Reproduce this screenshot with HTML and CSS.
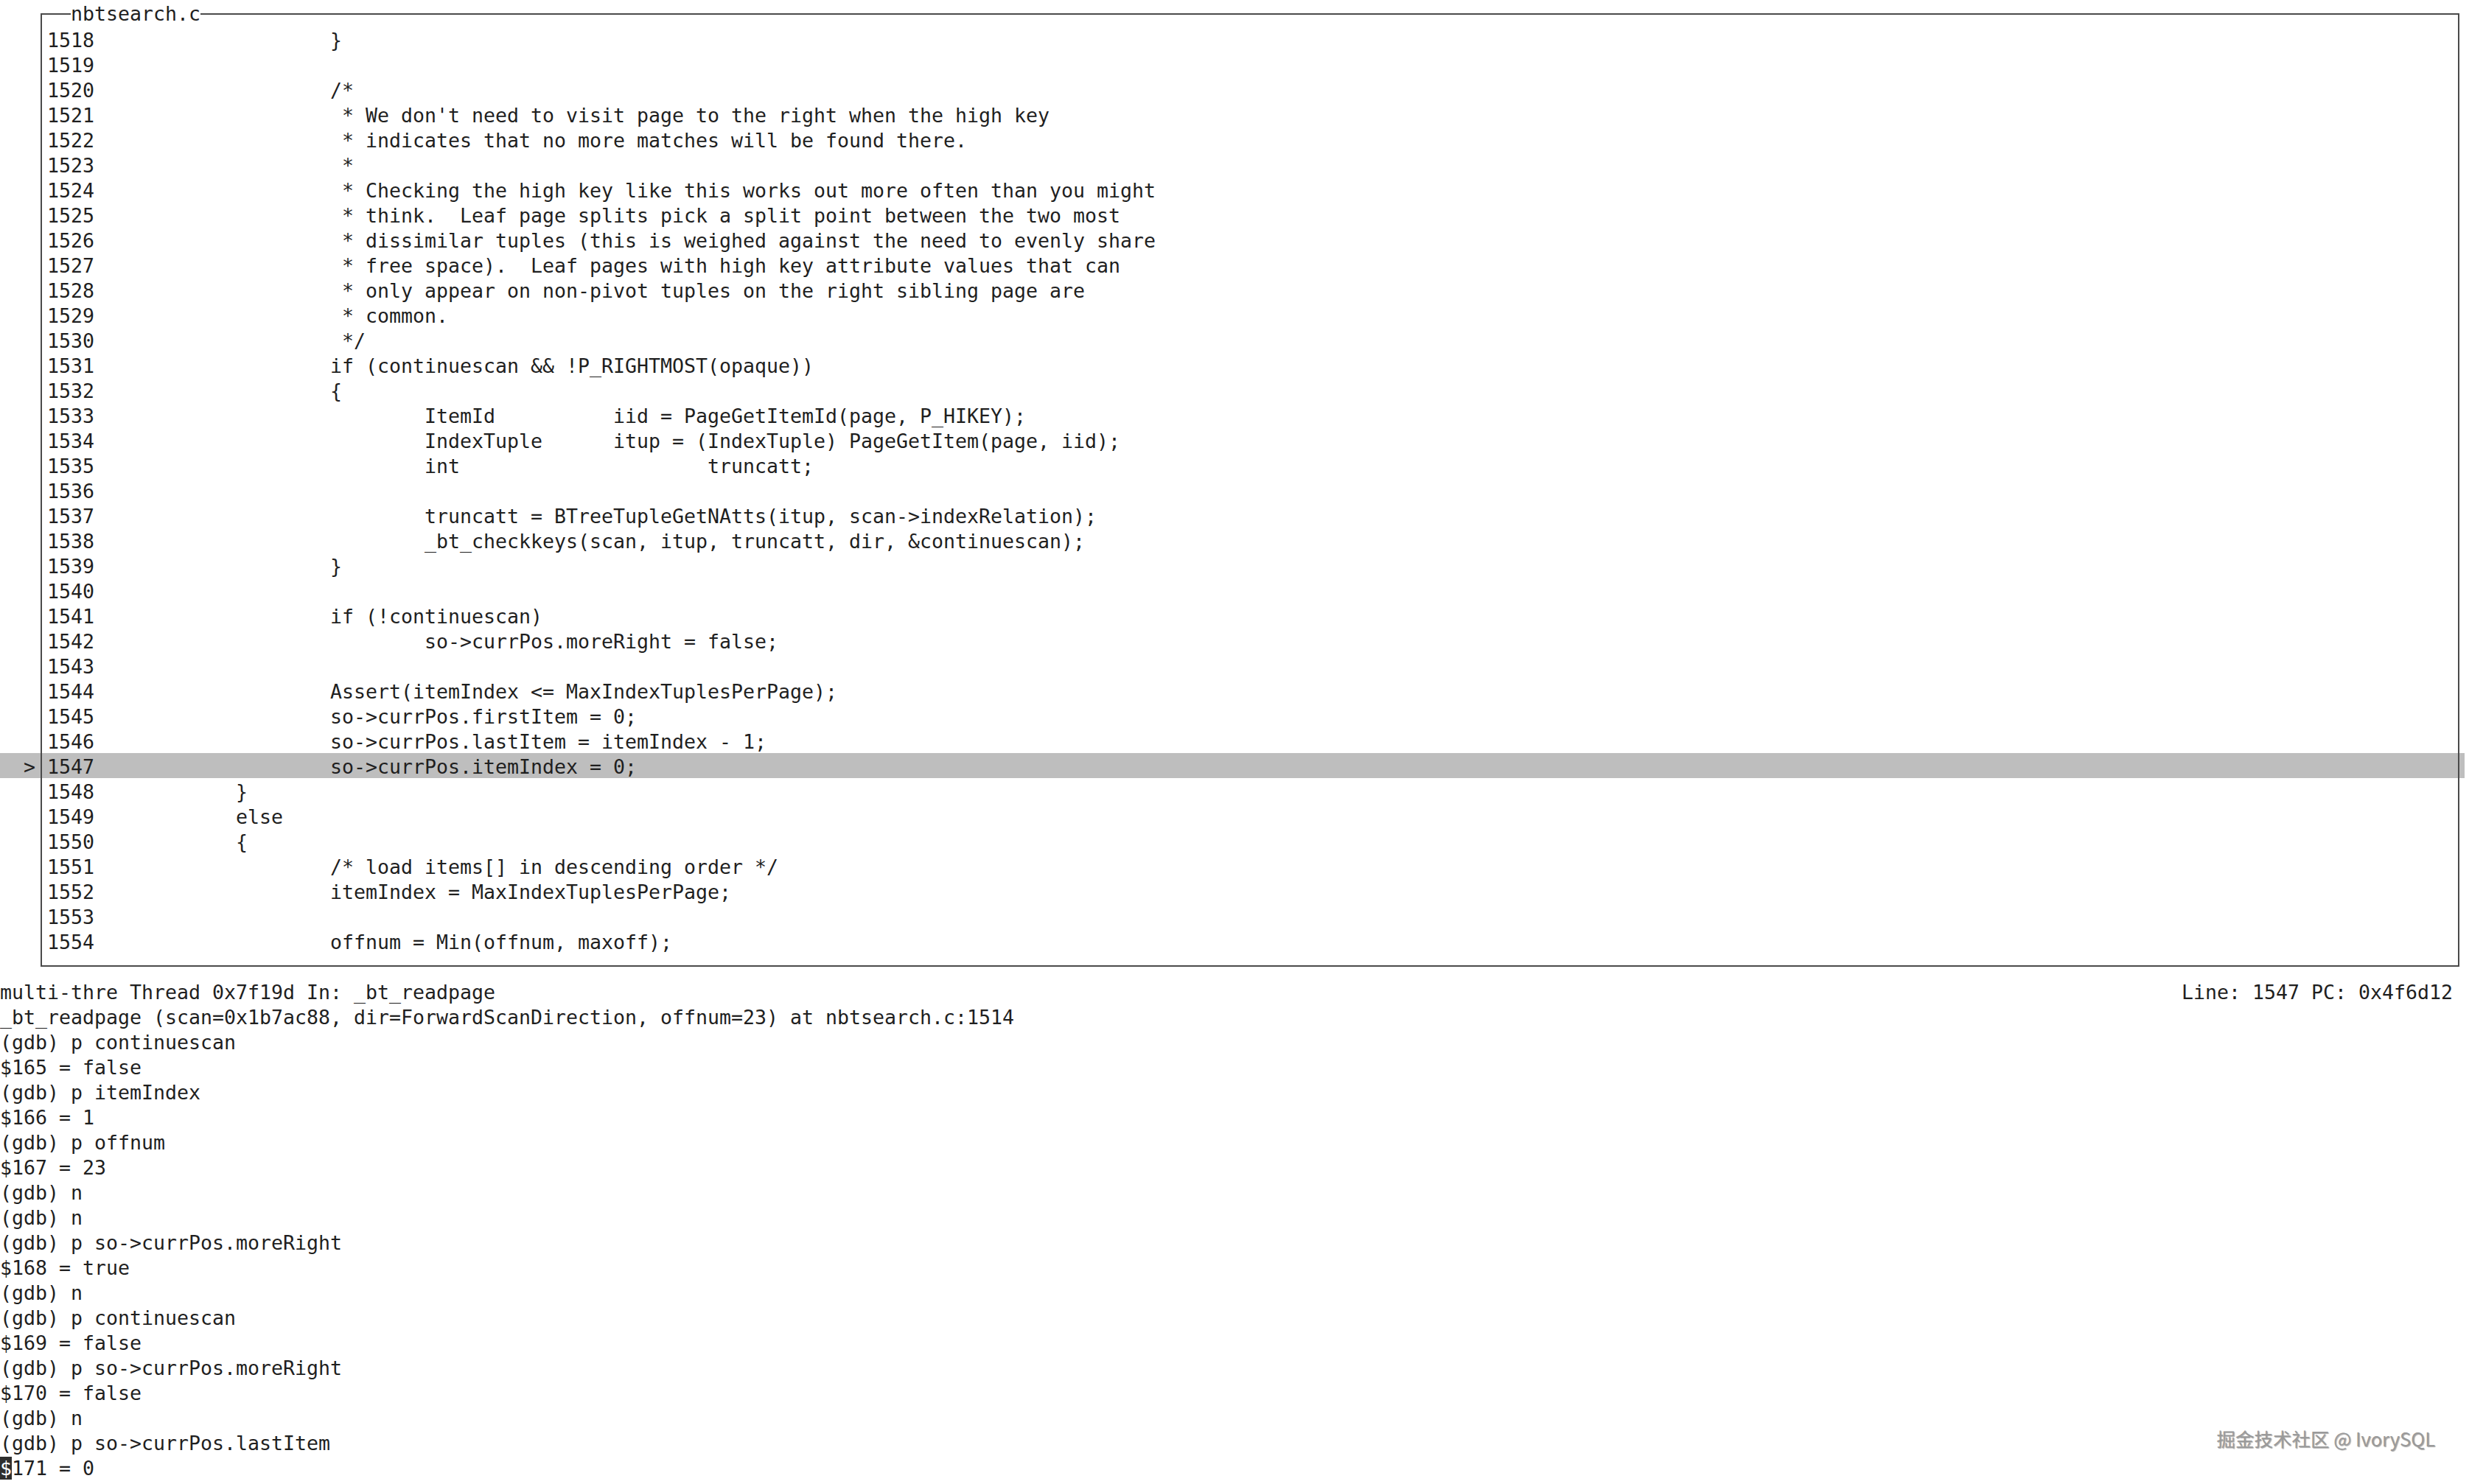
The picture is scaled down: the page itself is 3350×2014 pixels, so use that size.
FILE: index.html
```html
<!DOCTYPE html>
<html>
<head>
<meta charset="utf-8">
<title>gdb tui - nbtsearch.c</title>
<link rel="stylesheet" href="styles.css">
</head>
<body>
<div class="term">
  <div class="row box edge-top">
    <span class="mark"></span>
    <span class="corner c-tl"></span>
    <span class="hline"><span class="title">nbtsearch.c</span></span>
    <span class="corner c-tr"></span>
  </div>

  <div class="row box"><span class="mark"></span><span class="vb"></span><span class="txt"><span class="ln">1518</span><span class="code i2">}</span></span><span class="vb"></span></div>
  <div class="row box"><span class="mark"></span><span class="vb"></span><span class="txt"><span class="ln">1519</span><span class="code"></span></span><span class="vb"></span></div>
  <div class="row box"><span class="mark"></span><span class="vb"></span><span class="txt"><span class="ln">1520</span><span class="code i2">/*</span></span><span class="vb"></span></div>
  <div class="row box"><span class="mark"></span><span class="vb"></span><span class="txt"><span class="ln">1521</span><span class="code i2"> * We don't need to visit page to the right when the high key</span></span><span class="vb"></span></div>
  <div class="row box"><span class="mark"></span><span class="vb"></span><span class="txt"><span class="ln">1522</span><span class="code i2"> * indicates that no more matches will be found there.</span></span><span class="vb"></span></div>
  <div class="row box"><span class="mark"></span><span class="vb"></span><span class="txt"><span class="ln">1523</span><span class="code i2"> *</span></span><span class="vb"></span></div>
  <div class="row box"><span class="mark"></span><span class="vb"></span><span class="txt"><span class="ln">1524</span><span class="code i2"> * Checking the high key like this works out more often than you might</span></span><span class="vb"></span></div>
  <div class="row box"><span class="mark"></span><span class="vb"></span><span class="txt"><span class="ln">1525</span><span class="code i2"> * think.  Leaf page splits pick a split point between the two most</span></span><span class="vb"></span></div>
  <div class="row box"><span class="mark"></span><span class="vb"></span><span class="txt"><span class="ln">1526</span><span class="code i2"> * dissimilar tuples (this is weighed against the need to evenly share</span></span><span class="vb"></span></div>
  <div class="row box"><span class="mark"></span><span class="vb"></span><span class="txt"><span class="ln">1527</span><span class="code i2"> * free space).  Leaf pages with high key attribute values that can</span></span><span class="vb"></span></div>
  <div class="row box"><span class="mark"></span><span class="vb"></span><span class="txt"><span class="ln">1528</span><span class="code i2"> * only appear on non-pivot tuples on the right sibling page are</span></span><span class="vb"></span></div>
  <div class="row box"><span class="mark"></span><span class="vb"></span><span class="txt"><span class="ln">1529</span><span class="code i2"> * common.</span></span><span class="vb"></span></div>
  <div class="row box"><span class="mark"></span><span class="vb"></span><span class="txt"><span class="ln">1530</span><span class="code i2"> */</span></span><span class="vb"></span></div>
  <div class="row box"><span class="mark"></span><span class="vb"></span><span class="txt"><span class="ln">1531</span><span class="code i2">if (continuescan &amp;&amp; !P_RIGHTMOST(opaque))</span></span><span class="vb"></span></div>
  <div class="row box"><span class="mark"></span><span class="vb"></span><span class="txt"><span class="ln">1532</span><span class="code i2">{</span></span><span class="vb"></span></div>
  <div class="row box"><span class="mark"></span><span class="vb"></span><span class="txt"><span class="ln">1533</span><span class="code i3">ItemId          iid = PageGetItemId(page, P_HIKEY);</span></span><span class="vb"></span></div>
  <div class="row box"><span class="mark"></span><span class="vb"></span><span class="txt"><span class="ln">1534</span><span class="code i3">IndexTuple      itup = (IndexTuple) PageGetItem(page, iid);</span></span><span class="vb"></span></div>
  <div class="row box"><span class="mark"></span><span class="vb"></span><span class="txt"><span class="ln">1535</span><span class="code i3">int                     truncatt;</span></span><span class="vb"></span></div>
  <div class="row box"><span class="mark"></span><span class="vb"></span><span class="txt"><span class="ln">1536</span><span class="code"></span></span><span class="vb"></span></div>
  <div class="row box"><span class="mark"></span><span class="vb"></span><span class="txt"><span class="ln">1537</span><span class="code i3">truncatt = BTreeTupleGetNAtts(itup, scan-&gt;indexRelation);</span></span><span class="vb"></span></div>
  <div class="row box"><span class="mark"></span><span class="vb"></span><span class="txt"><span class="ln">1538</span><span class="code i3">_bt_checkkeys(scan, itup, truncatt, dir, &amp;continuescan);</span></span><span class="vb"></span></div>
  <div class="row box"><span class="mark"></span><span class="vb"></span><span class="txt"><span class="ln">1539</span><span class="code i2">}</span></span><span class="vb"></span></div>
  <div class="row box"><span class="mark"></span><span class="vb"></span><span class="txt"><span class="ln">1540</span><span class="code"></span></span><span class="vb"></span></div>
  <div class="row box"><span class="mark"></span><span class="vb"></span><span class="txt"><span class="ln">1541</span><span class="code i2">if (!continuescan)</span></span><span class="vb"></span></div>
  <div class="row box"><span class="mark"></span><span class="vb"></span><span class="txt"><span class="ln">1542</span><span class="code i3">so-&gt;currPos.moreRight = false;</span></span><span class="vb"></span></div>
  <div class="row box"><span class="mark"></span><span class="vb"></span><span class="txt"><span class="ln">1543</span><span class="code"></span></span><span class="vb"></span></div>
  <div class="row box"><span class="mark"></span><span class="vb"></span><span class="txt"><span class="ln">1544</span><span class="code i2">Assert(itemIndex &lt;= MaxIndexTuplesPerPage);</span></span><span class="vb"></span></div>
  <div class="row box"><span class="mark"></span><span class="vb"></span><span class="txt"><span class="ln">1545</span><span class="code i2">so-&gt;currPos.firstItem = 0;</span></span><span class="vb"></span></div>
  <div class="row box"><span class="mark"></span><span class="vb"></span><span class="txt"><span class="ln">1546</span><span class="code i2">so-&gt;currPos.lastItem = itemIndex - 1;</span></span><span class="vb"></span></div>
  <div class="row box current"><span class="mark">  &gt;</span><span class="vb"></span><span class="txt"><span class="ln">1547</span><span class="code i2">so-&gt;currPos.itemIndex = 0;</span></span><span class="vb"></span></div>
  <div class="row box"><span class="mark"></span><span class="vb"></span><span class="txt"><span class="ln">1548</span><span class="code i1">}</span></span><span class="vb"></span></div>
  <div class="row box"><span class="mark"></span><span class="vb"></span><span class="txt"><span class="ln">1549</span><span class="code i1">else</span></span><span class="vb"></span></div>
  <div class="row box"><span class="mark"></span><span class="vb"></span><span class="txt"><span class="ln">1550</span><span class="code i1">{</span></span><span class="vb"></span></div>
  <div class="row box"><span class="mark"></span><span class="vb"></span><span class="txt"><span class="ln">1551</span><span class="code i2">/* load items[] in descending order */</span></span><span class="vb"></span></div>
  <div class="row box"><span class="mark"></span><span class="vb"></span><span class="txt"><span class="ln">1552</span><span class="code i2">itemIndex = MaxIndexTuplesPerPage;</span></span><span class="vb"></span></div>
  <div class="row box"><span class="mark"></span><span class="vb"></span><span class="txt"><span class="ln">1553</span><span class="code"></span></span><span class="vb"></span></div>
  <div class="row box"><span class="mark"></span><span class="vb"></span><span class="txt"><span class="ln">1554</span><span class="code i2">offnum = Min(offnum, maxoff);</span></span><span class="vb"></span></div>

  <div class="row box edge-bottom">
    <span class="mark"></span>
    <span class="corner c-bl"></span>
    <span class="hline"></span>
    <span class="corner c-br"></span>
  </div>

  <div class="row status">
    <span>multi-thre Thread 0x7f19d In: _bt_readpage</span>
    <span>Line: 1547 PC: 0x4f6d12</span>
  </div>

  <div class="cmd">
    <div class="line">_bt_readpage (scan=0x1b7ac88, dir=ForwardScanDirection, offnum=23) at nbtsearch.c:1514</div>
    <div class="line">(gdb) p continuescan</div>
    <div class="line">$165 = false</div>
    <div class="line">(gdb) p itemIndex</div>
    <div class="line">$166 = 1</div>
    <div class="line">(gdb) p offnum</div>
    <div class="line">$167 = 23</div>
    <div class="line">(gdb) n</div>
    <div class="line">(gdb) n</div>
    <div class="line">(gdb) p so-&gt;currPos.moreRight</div>
    <div class="line">$168 = true</div>
    <div class="line">(gdb) n</div>
    <div class="line">(gdb) p continuescan</div>
    <div class="line">$169 = false</div>
    <div class="line">(gdb) p so-&gt;currPos.moreRight</div>
    <div class="line">$170 = false</div>
    <div class="line">(gdb) n</div>
    <div class="line">(gdb) p so-&gt;currPos.lastItem</div>
    <div class="line"><span class="cursor">$</span>171 = 0</div>
  </div>
</div>
<div class="watermark">掘金技术社区 @ IvorySQL</div>
</body>
</html>
```

FILE: styles.css
```css
html, body {
  margin: 0;
  padding: 0;
  background: #ffffff;
}

body {
  width: 3350px;
  height: 2014px;
  overflow: hidden;
  position: relative;
  font-family: "DejaVu Sans Mono", "Liberation Mono", monospace;
  font-size: 26.58px;
  color: #1f1f1f;
}

.term {
  width: 3344px;
  padding-top: 2px;
}

.row {
  height: 34px;
  line-height: 37px;
  white-space: pre;
  overflow: hidden;
}

.row.box {
  display: grid;
  grid-template-columns: 48px 16px 1fr 16px;
}

.mark {
  display: block;
}

.vb {
  display: block;
  background: linear-gradient(#4a4a4a, #4a4a4a) 7px 0 / 2px 100% no-repeat;
}

.txt {
  display: block;
  overflow: hidden;
}

.ln {
  display: inline-block;
  width: 128px;
}

.code {
  display: inline-block;
}

.i1 { padding-left: 128px; }
.i2 { padding-left: 256px; }
.i3 { padding-left: 384px; }

.current {
  background: #bebebe;
}

.edge-top,
.edge-bottom {
  line-height: 34px;
}

.hline {
  display: block;
  background: linear-gradient(#4a4a4a, #4a4a4a) 0 16px / 100% 2px no-repeat;
}

.title {
  margin-left: 32px;
  background: #ffffff;
}

.corner {
  display: block;
}

.c-tl {
  background:
    linear-gradient(#4a4a4a, #4a4a4a) 7px 16px / 9px 2px no-repeat,
    linear-gradient(#4a4a4a, #4a4a4a) 7px 16px / 2px 18px no-repeat;
}

.c-tr {
  background:
    linear-gradient(#4a4a4a, #4a4a4a) 0 16px / 9px 2px no-repeat,
    linear-gradient(#4a4a4a, #4a4a4a) 7px 16px / 2px 18px no-repeat;
}

.c-bl {
  background:
    linear-gradient(#4a4a4a, #4a4a4a) 7px 16px / 9px 2px no-repeat,
    linear-gradient(#4a4a4a, #4a4a4a) 7px 0 / 2px 18px no-repeat;
}

.c-br {
  background:
    linear-gradient(#4a4a4a, #4a4a4a) 0 16px / 9px 2px no-repeat,
    linear-gradient(#4a4a4a, #4a4a4a) 7px 0 / 2px 18px no-repeat;
}

.status {
  display: flex;
  justify-content: space-between;
  padding-right: 16px;
}

.cmd .line {
  height: 34px;
  line-height: 37px;
  white-space: pre;
  overflow: hidden;
}

.cursor {
  background: #2e2e2e;
  color: #ffffff;
}

.watermark {
  position: absolute;
  right: 46px;
  top: 1937px;
  font-family: "Noto Sans CJK SC", "Noto Sans", sans-serif;
  font-size: 25.5px;
  line-height: 30px;
  color: #9a9a9a;
  white-space: nowrap;
  text-shadow: 1px 1px 1px rgba(0, 0, 0, 0.35), -1px -1px 0 #ffffff;
}
```
